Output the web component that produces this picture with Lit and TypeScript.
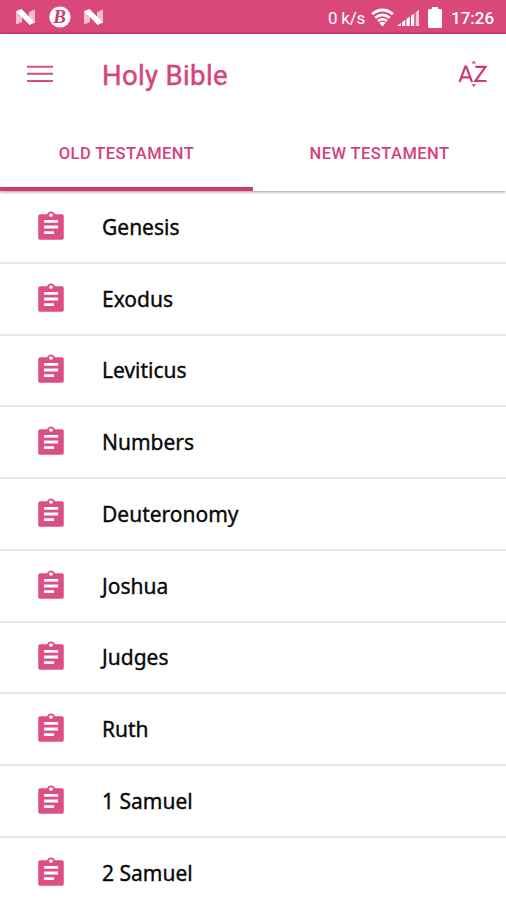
import { LitElement, html, css } from "lit";
import { customElement, property, state } from "lit/decorators.js";
import { classMap } from "lit/directives/class-map.js";

const nougat = () => html`<svg width="21" height="18" viewBox="0 0 21 18">
  <path d="M1 3.5L7 1.2V14L1 16.5Z M14 4L20 1.5V14.5L14 17Z" fill="#f3bcd0" />
  <path d="M1 3.2L6.5 1L20 14.6L14.4 16.8Z" fill="#fff" />
</svg>`;

@customElement("status-bar")
class StatusBar extends LitElement {
  static styles = css`
    :host { display: flex; align-items: center; height: 34px; box-sizing: border-box; padding: 0 11px 0 15px;
      background: #da477b; border-bottom: 2px solid #d63a73; color: #fff; font: 500 16.5px Roboto, sans-serif; }
    .notes { display: flex; align-items: center; gap: 12.5px; flex: 1; padding-top: 2px; }
    .rate { font-weight: 400; font-size: 17px; width: 38px; letter-spacing: -0.2px; white-space: nowrap; padding-top: 3px; }
    .clock { width: 44px; font-size: 17px; padding-top: 3px; white-space: nowrap; }
    .wifi { margin: 2px 0 0 5px; }
    .signal { margin: 3px 0 0 3px; }
    .battery { margin: 2px 9px 0 8px; }
    .beta { font: italic 700 19px "Liberation Serif", serif; }
    svg { display: block; }
  `;
  render() {
    return html`
      <div class="notes">
        ${nougat()}
        <svg width="22" height="22" viewBox="0 0 22 22"><circle cx="11" cy="11" r="10.6" fill="#fff" /><text class="beta" x="10.6" y="17.2" text-anchor="middle" fill="#c93f70">B</text></svg>
        ${nougat()}
      </div>
      <span class="rate">0 k/s</span>
      <svg class="wifi" width="23" height="19" viewBox="0 0 23 19" fill="none" stroke="#fff">
        <path d="M1.2 6.2Q11.5-2 21.8 6.2" stroke-width="2.9" /><path d="M4.2 9.7Q11.5 4 18.8 9.7" stroke-width="2.7" />
        <path d="M7 13Q11.5 9.5 16 13" stroke-width="2.4" /><path d="M8.3 14.7Q11.5 13 14.7 14.7L11.5 18.4Z" fill="#fff" stroke="none" />
      </svg>
      <svg class="signal" width="23" height="18" viewBox="0 0 23 18" fill="#fff">
        <path d="M0 17L4 14V17Z M5 13.3L8.3 11V17H5Z M9.5 10L12.8 7.6V17H9.5Z M14 6.7L17.2 4.4V17H14Z" />
        <path d="M18.7 3.2L22 .6V17H18.7Z" opacity=".7" />
      </svg>
      <svg class="battery" width="14" height="21" viewBox="0 0 14 21"><path d="M4 0H10V2H12.5Q14 2 14 3.5V19.5Q14 21 12.5 21H1.5Q0 21 0 19.5V3.5Q0 2 1.5 2H4Z" fill="#fff" /></svg>
      <span class="clock">17:26</span>`;
  }
}

@customElement("book-row")
class BookRow extends LitElement {
  @property() name = "";
  static styles = css`
    :host { display: flex; align-items: center; height: 71.75px; box-sizing: border-box; padding-left: 34px;
      border-bottom: 2px solid #e7e7e7; background: #fff; }
    svg { width: 34px; height: 34px; flex: none; }
    .name { margin-left: 34px; font: 400 21px/30px "Noto Sans", sans-serif; color: #080808; -webkit-text-stroke: 0.35px #080808; white-space: nowrap; }
  `;
  render() {
    return html`<svg viewBox="0 0 24 24">
        <path fill="#dc4e84" d="M19.7 3h-4.9C14.4 1.8 13.3 1 12 1s-2.4.8-2.8 2H4.3C3.6 3 3 3.6 3 4.3v15.4c0 .7.6 1.3 1.3 1.3h15.4c.7 0 1.3-.6 1.3-1.3V4.3c0-.7-.6-1.3-1.3-1.3zM12 2.3c.75 0 1.3.55 1.3 1.25s-.55 1.25-1.3 1.25-1.3-.55-1.3-1.25S11.25 2.3 12 2.3zm2.2 14.7H7v-2h7.2v2zm2.8-4H7v-2h10v2zm0-4H7V7h10v2z" />
      </svg><span class="name">${this.name}</span>`;
  }
}

@customElement("app-root")
class AppRoot extends LitElement {
  @state() private active = 0;
  private tabs = ["OLD TESTAMENT", "NEW TESTAMENT"];
  private books = ["Genesis", "Exodus", "Leviticus", "Numbers", "Deuteronomy", "Joshua", "Judges", "Ruth", "1 Samuel", "2 Samuel"];
  static styles = css`
    :host { display: block; width: 506px; height: 900px; overflow: hidden; background: #fff; }
    .head { position: relative; background: #fff; box-shadow: 0 1px 3px rgba(0, 0, 0, 0.4); }
    .bar { display: flex; align-items: center; height: 80px; padding: 0 18px 0 27px; color: #d5457c; }
    .title { flex: 1; margin: 3px 0 0 49px; font: 400 27.5px/36px Roboto, sans-serif; letter-spacing: 0.35px; -webkit-text-stroke: 0.45px #d5457c; }
    .tabs { display: flex; height: 77px; }
    .tab { flex: 1; display: flex; align-items: center; justify-content: center; box-sizing: border-box; padding-top: 5px;
      border-bottom: 4px solid transparent; font: 500 16.5px Roboto, sans-serif; letter-spacing: 0.45px; color: #d5417c; white-space: nowrap; }
    .on { border-color: #cf3c6c; }
    .sort { margin-top: -1px; }
    .list { padding-top: 1px; }
  `;
  render() {
    return html`
      <status-bar></status-bar>
      <div class="head">
        <div class="bar">
          <svg width="26" height="20" viewBox="0 0 26 20"><path d="M0 2.7H26M0 9.8H26M0 16.9H26" stroke="#d54c80" stroke-width="2" /></svg>
          <span class="title">Holy Bible</span>
          <svg class="sort" width="30" height="28" viewBox="0 0 30 28" fill="none" stroke="#d0387a" stroke-width="2.2">
            <path d="M1.6 22L7.3 6.5H8.3L14 22M3.8 17.3H12.2M17.3 6.8H27.5L17.3 21H28.5" />
            <path d="M13.3 3.5L15.8 .7L18.3 3.5ZM13.3 24.2L15.8 27L18.3 24.2Z" fill="#d54c80" stroke="none" />
          </svg>
        </div>
        <div class="tabs">${this.tabs.map((t, i) => html`<div class=${classMap({ tab: true, on: i === this.active })} @click=${() => (this.active = i)}>${t}</div>`)}</div>
      </div>
      <div class="list">${this.books.map((b) => html`<book-row .name=${b}></book-row>`)}</div>`;
  }
}
